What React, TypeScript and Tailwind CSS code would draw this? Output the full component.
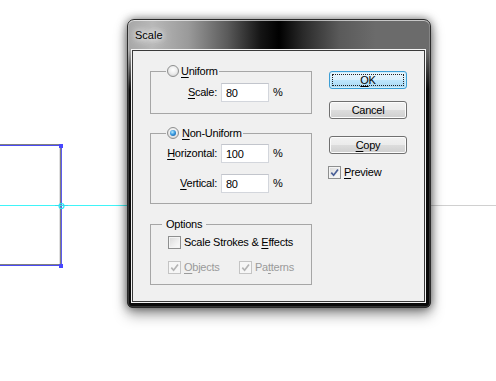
import type { ReactNode } from "react";

const sans = "font-['Liberation_Sans',Arial,sans-serif]";

function U({ children }: { children: ReactNode }) {
  return <span className="underline decoration-1 underline-offset-[2px]">{children}</span>;
}

function Radio({ checked }: { checked?: boolean }) {
  return (
    <span className="flex h-[12px] w-[12px] items-center justify-center rounded-full border border-[#8e8f8f] bg-[radial-gradient(circle_at_50%_40%,#ffffff_0%,#ececec_50%,#c6c6c6_100%)]">
      {checked ? (
        <span className="h-[6px] w-[6px] rounded-full bg-[radial-gradient(circle_at_40%_35%,#b8ecff_0%,#3a9ae0_45%,#0c4b8e_100%)]" />
      ) : null}
    </span>
  );
}

function Checkbox({ checked, disabled }: { checked?: boolean; disabled?: boolean }) {
  return (
    <span
      className={
        disabled
          ? "flex h-[13px] w-[13px] shrink-0 items-center justify-center border border-[#c4c4c4] bg-[#f6f6f6]"
          : "flex h-[13px] w-[13px] shrink-0 items-center justify-center border border-[#8e8f8f] bg-[linear-gradient(135deg,#d8d8d8_0%,#f0f0f0_60%,#fbfbfb_100%)] shadow-[inset_0_0_0_1px_#f4f4f4]"
      }
    >
      {checked ? (
        <svg width="11" height="11" viewBox="0 0 11 11">
          <path
            d="M2.3 5.6 L4.6 8.2 L9 2.4"
            fill="none"
            stroke={disabled ? "#b4b4b4" : "#4a5f97"}
            strokeWidth="1.7"
          />
        </svg>
      ) : null}
    </span>
  );
}

function Field({ label, value }: { label: ReactNode; value: string }) {
  return (
    <div className="flex h-[19px] items-center">
      <span className="w-[66px] text-right">{label}</span>
      <input
        readOnly
        value={value}
        className={`${sans} ml-[4px] h-[19px] w-[48px] border border-[#d3d6dc] border-t-[#c2c5cc] bg-white pl-[4px] text-[11px] tracking-[-0.25px] text-black outline-none`}
      />
      <span className="ml-[4px]">%</span>
    </div>
  );
}

function Button({ children, primary }: { children: ReactNode; primary?: boolean }) {
  return (
    <button
      className={
        primary
          ? "relative flex h-[18px] w-[78px] items-center justify-center rounded-[3px] border border-[#3c9fd6] bg-[linear-gradient(to_bottom,#eaf6fd_0%,#d9f0fc_50%,#bee6fd_50%,#a7d9f5_100%)] shadow-[inset_0_0_0_1px_#cdeefc] text-black"
          : "flex h-[18px] w-[78px] items-center justify-center rounded-[3px] border border-[#707070] bg-[linear-gradient(to_bottom,#f2f2f2_0%,#ebebeb_50%,#dddddd_50%,#cfcfcf_100%)] shadow-[inset_0_0_0_1px_#fcfcfc] text-black"
      }
    >
      {primary ? <span className="absolute inset-[2px] border border-dotted border-[#222]" /> : null}
      <span className="relative">{children}</span>
    </button>
  );
}

export default function App() {
  return (
    <div className={`${sans} relative h-[381px] w-[496px] overflow-hidden bg-white text-[11px] tracking-[-0.25px] text-black`}>
      <svg className="absolute inset-0" width="496" height="381">
        <line x1="0" y1="205.5" x2="496" y2="205.5" stroke="#d0d0d0" />
        <line x1="0" y1="205.5" x2="127" y2="205.5" stroke="#3ff4f8" />
        <line x1="0" y1="145" x2="61" y2="145" stroke="#808080" strokeWidth="2" />
        <line x1="0" y1="265" x2="61" y2="265" stroke="#808080" strokeWidth="2" />
        <line x1="0" y1="145.5" x2="61" y2="145.5" stroke="#4b4bf5" />
        <line x1="0" y1="265.5" x2="61" y2="265.5" stroke="#4b4bf5" />
        <line x1="60.5" y1="145" x2="60.5" y2="266" stroke="#7f7f7f" strokeWidth="1.5" />
        <line x1="61.5" y1="145" x2="61.5" y2="266" stroke="#5b5bf0" />
        <rect x="59" y="144" width="4" height="4" fill="#4747ff" />
        <rect x="59" y="264" width="4" height="4" fill="#4747ff" />
        <circle cx="61.5" cy="206" r="2.5" fill="none" stroke="#2fe0f0" strokeWidth="1.2" />
        <line x1="55" y1="205.5" x2="68" y2="205.5" stroke="#2fe0f0" />
      </svg>

      <div className="absolute left-[127px] top-[19px] flex h-[289px] w-[304px] flex-col rounded-t-[7px] rounded-b-[5px] border border-[#2a2a2a] bg-[linear-gradient(to_bottom,rgba(0,0,0,0)_30px,#0a0a0a_70px),linear-gradient(to_right,#a6a6a6_0%,#b8b8b8_8%,#9a9a9a_20%,#5a5a5a_33%,#141414_44%,#000_50%,#2a2a2a_58%,#5a5a5a_70%,#6b6b6b_82%,#6b6b6b_100%)] shadow-[0_0_10px_rgba(0,0,0,0.55),0_7px_14px_rgba(0,0,0,0.35),inset_0_1px_0_rgba(255,255,255,0.55),inset_0_0_0_1px_rgba(255,255,255,0.18)]">
        <div className="flex h-[30px] items-center pl-[7px]">
          <span className="text-[11px] tracking-normal text-black [text-shadow:0_0_6px_#fff,0_0_10px_#fff,0_0_14px_#fff]">Scale</span>
        </div>

        <div className="mb-[5px] ml-[4px] mr-[5px] flex flex-1 border border-[#3a3a3a] bg-[#f0f0f0] shadow-[0_0_0_1px_#f4f4f4]">
          <div className="ml-[17px] flex w-[162px] flex-col">
            <fieldset className="mt-[13px] border border-[#a6a6a6] px-0 pb-[11px] pt-[5px]">
              <legend className="ml-[15px] flex h-[14px] items-center pl-[1px] pr-[1px]">
                <Radio />
                <span className="ml-[2px]">
                  <U>U</U>niform
                </span>
              </legend>
              <Field label={<><U>S</U>cale:</>} value="80" />
            </fieldset>

            <fieldset className="mt-[12px] flex flex-col gap-[11px] border border-[#a6a6a6] px-0 pb-[10px] pt-[4px]">
              <legend className="ml-[15px] flex h-[14px] items-center pl-[1px] pr-[1px]">
                <Radio checked />
                <span className="ml-[3px]">
                  <U>N</U>on-Uniform
                </span>
              </legend>
              <Field label={<><U>H</U>orizontal:</>} value="100" />
              <Field label={<><U>V</U>ertical:</>} value="80" />
            </fieldset>

            <fieldset className="mt-[13px] flex flex-col gap-[11px] border border-[#a6a6a6] px-0 pb-[10px] pt-[4px]">
              <legend className="ml-[11px] flex h-[14px] items-center px-[4px]">Options</legend>
              <div className="flex h-[14px] items-center pl-[17px]">
                <Checkbox />
                <span className="ml-[3px]">
                  Scale Strokes &amp; <U>E</U>ffects
                </span>
              </div>
              <div className="flex h-[14px] items-center pl-[17px] text-[#9a9a9a]">
                <div className="flex w-[71px] items-center">
                  <Checkbox checked disabled />
                  <span className="ml-[3px]">
                    <U>O</U>bjects
                  </span>
                </div>
                <div className="flex items-center">
                  <Checkbox checked disabled />
                  <span className="ml-[3px]">
                    Pa<U>t</U>terns
                  </span>
                </div>
              </div>
            </fieldset>
          </div>

          <div className="ml-[17px] flex flex-col pt-[20px]">
            <Button primary>
              <U>O</U>K
            </Button>
            <div className="mt-[12px]">
              <Button>Cancel</Button>
            </div>
            <div className="mt-[17px]">
              <Button>
                <U>C</U>opy
              </Button>
            </div>
            <div className="-ml-px mt-[11px] flex h-[14px] items-center">
              <Checkbox checked />
              <span className="ml-[3px]">
                <U>P</U>review
              </span>
            </div>
          </div>
        </div>
      </div>
    </div>
  );
}
